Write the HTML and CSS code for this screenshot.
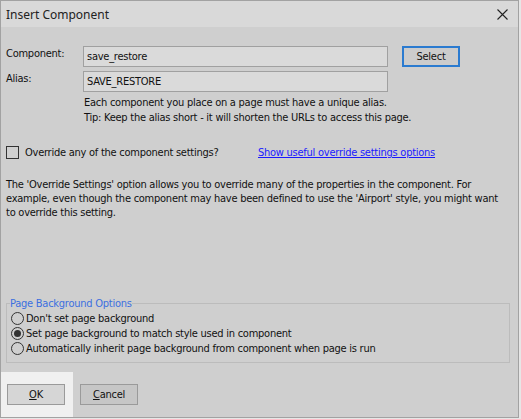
FILE: index.html
```html
<!DOCTYPE html>
<html lang="en">
<head>
    <meta charset="UTF-8">
    <title>Insert Component</title>
    <link rel="stylesheet" href="styles.css">
</head>
<body>
    <div class="window">
        <div class="titlebar">
            <span class="title">Insert Component</span>
            <svg class="close" width="11" height="11" viewBox="0 0 11 11">
                <path d="M0.5 0.5 L10.5 10.5 M10.5 0.5 L0.5 10.5" stroke="#222" stroke-width="1.1" fill="none"/>
            </svg>
        </div>
        <div class="content">
            <div class="field-row">
                <label class="field-label">Component:</label>
                <input class="field-input" type="text" value="save_restore">
                <button class="btn btn-default">Select</button>
            </div>
            <div class="field-row">
                <label class="field-label">Alias:</label>
                <input class="field-input" type="text" value="SAVE_RESTORE">
            </div>
            <div class="hint">
                <div>Each component you place on a page must have a unique alias.</div>
                <div>Tip: Keep the alias short - it will shorten the URLs to access this page.</div>
            </div>

            <div class="override-row">
                <label class="check">
                    <span class="checkbox"></span>
                    Override any of the component settings?
                </label>
                <a class="link" href="#">Show useful override settings options</a>
            </div>

            <p class="note">The 'Override Settings' option allows you to override many of the properties in the component. For example, even though the component may have been defined to use the 'Airport' style, you might want to override this setting.</p>

            <fieldset class="group">
                <legend>Page Background Options</legend>
                <label class="radio"><span class="dot"></span>Don't set page background</label>
                <label class="radio"><span class="dot checked"></span>Set page background to match style used in component</label>
                <label class="radio"><span class="dot"></span>Automatically inherit page background from component when page is run</label>
            </fieldset>
        </div>
        <div class="footer">
            <div class="ok-area">
                <button class="btn"><u>O</u>K</button>
            </div>
            <button class="btn btn-cancel"><u>C</u>ancel</button>
        </div>
    </div>
</body>
</html>
```

FILE: styles.css
```css
body {
    margin: 0;
    width: 521px;
    height: 419px;
    background-color: #e6e6e6;
    font-family: Tahoma, "DejaVu Sans Condensed", "Liberation Sans", sans-serif;
    font-size: 11px;
    letter-spacing: -0.25px;
    color: #111;
}
.window {
    box-sizing: border-box;
    width: 519px;
    height: 418px;
    border: 1px solid #a2a2a2;
    background-color: #cfcfcf;
    display: flex;
    flex-direction: column;
}
.titlebar {
    height: 26px;
    background-color: #d9d9d9;
    display: flex;
    align-items: center;
    justify-content: space-between;
    padding: 0 10px 0 5px;
}
.title {
    font-family: "Noto Sans", "Open Sans", sans-serif;
    font-size: 12px;
    letter-spacing: 0;
    color: #222;
}
.close {
    display: block;
}
.content {
    flex: 1;
    padding: 19px 8px 0 5px;
    display: flex;
    flex-direction: column;
}
.field-row {
    display: flex;
    align-items: flex-start;
    height: 21px;
    margin-bottom: 4px;
}
.field-label {
    width: 77px;
    padding-top: 1px;
}
.field-input {
    box-sizing: border-box;
    width: 305px;
    height: 21px;
    border: 1px solid #a0a0a0;
    background-color: #dadada;
    font-family: inherit;
    font-size: 11px;
    letter-spacing: inherit;
    padding: 0 3px;
    color: #111;
}
.btn {
    box-sizing: border-box;
    width: 58px;
    height: 21px;
    border: 1px solid #9a9a9a;
    background-color: #d6d6d6;
    font-family: inherit;
    font-size: 11px;
    letter-spacing: inherit;
    color: #111;
    padding: 0;
}
.btn-default {
    margin-left: 14px;
    border: 2px solid #2b7bd0;
    background-color: #cccccc;
}
.hint {
    padding-left: 78px;
    line-height: 15px;
    margin-top: -1px;
}
.override-row {
    display: flex;
    align-items: center;
    margin-top: 21px;
}
.check {
    display: flex;
    align-items: center;
    gap: 6px;
    width: 252px;
}
.checkbox {
    box-sizing: border-box;
    width: 13px;
    height: 13px;
    border: 1px solid #333;
    background-color: #d0d0d0;
}
.link {
    color: #1a1aff;
    text-decoration: underline;
}
.note {
    margin: 19px 0 0 0;
    line-height: 14px;
}
.group {
    margin: auto 0 9px 0;
    border: 1px solid #bcbcbc;
    padding: 1px 0 6px 4px;
}
.group legend {
    color: #3c6fe0;
    padding: 0;
    margin-left: -1px;
}
.radio {
    display: flex;
    align-items: center;
    gap: 2px;
    height: 15px;
}
.dot {
    box-sizing: border-box;
    width: 13px;
    height: 13px;
    border: 1px solid #333;
    border-radius: 50%;
    display: flex;
    align-items: center;
    justify-content: center;
}
.dot.checked::after {
    content: "";
    width: 7px;
    height: 7px;
    border-radius: 50%;
    background-color: #333;
}
.footer {
    height: 45px;
    display: flex;
    align-items: flex-start;
}
.ok-area {
    background-color: #f0f0f0;
    width: 72px;
    height: 45px;
    padding: 12px 0 0 6px;
    box-sizing: border-box;
}
.btn-cancel {
    margin: 12px 0 0 7px;
    background-color: #c6c6c6;
}
```
